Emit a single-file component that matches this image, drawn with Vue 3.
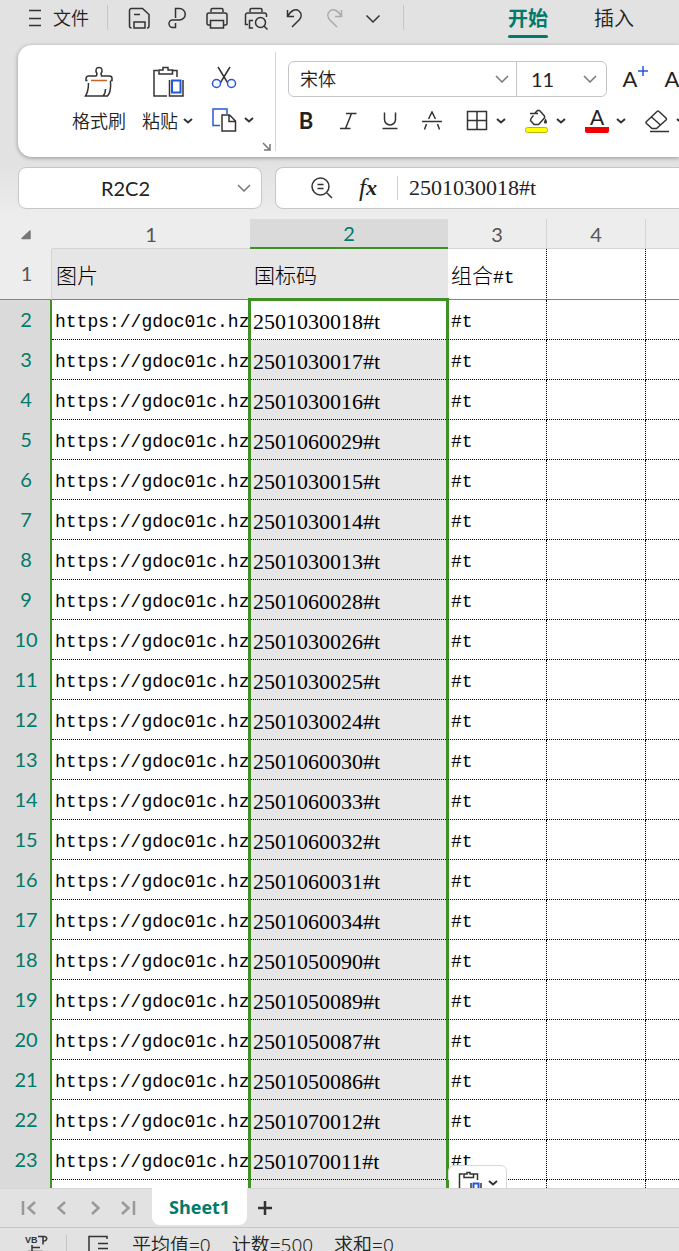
<script setup>
import { ref } from 'vue'

const codes = [
  '2501030018', '2501030017', '2501030016', '2501060029', '2501030015',
  '2501030014', '2501030013', '2501060028', '2501030026', '2501030025',
  '2501030024', '2501060030', '2501060033', '2501060032', '2501060031',
  '2501060034', '2501050090', '2501050089', '2501050087', '2501050086',
  '2501070012', '2501070011',
]

const rows = codes.map((code, i) => ({
  no: i + 2,
  url: 'https://gdoc01c.hz',
  code: code + '#t',
  combo: '#t',
}))

const fontName = ref('宋体')
const fontSize = ref('11')
const cellName = ref('R2C2')
const formula = ref('2501030018#t')

// 状态栏统计
const stats = ['平均值=0', '计数=500', '求和=0']
</script>

<template>
  <div class="app">
    <nav class="menubar">
      <button class="file-btn">
        <svg width="14" height="18" viewBox="0 0 14 18"><path d="M1 1.500h12M1 9.500h12M1 16.500h12" /></svg>
        文件
      </button>
      <i class="divider"></i>
      <div class="quick">
        <button aria-label="保存">
          <svg width="24" height="24" viewBox="0 0 24 24"><path d="M4.500 22a2 2 0 0 1-2-2V4.500a2 2 0 0 1 2-2h11l6.500 6V20a2 2 0 0 1-2 2M7 8.500h6M7 22v-6h11v6z" /></svg>
        </button>
        <button aria-label="输出为PDF">
          <svg width="24" height="24" viewBox="0 0 24 24"><path d="M9.500 12V2.500h4a5.500 5.500 0 0 1 0 11.500H6.500a3.500 3.500 0 0 0-3.500 3.500c0 2 1.500 4 3.500 4h3V17" /></svg>
        </button>
        <button aria-label="打印">
          <svg width="24" height="24" viewBox="0 0 24 24"><path d="M6 6V4a1.500 1.500 0 0 1 1.500-1.500h9A1.500 1.500 0 0 1 18 4v2M5 19H3.500A1.500 1.500 0 0 1 2 17.500V9a2 2 0 0 1 2-2h16a2 2 0 0 1 2 2v8.500a1.500 1.500 0 0 1-1.500 1.500H19M5.500 14.500h13V22h-13z" /></svg>
        </button>
        <button aria-label="打印预览">
          <svg width="24" height="24" viewBox="0 0 24 24"><path d="M6 6V4a1.500 1.500 0 0 1 1.500-1.500h9A1.500 1.500 0 0 1 18 4v2M4 18.500H1.500V9a2 2 0 0 1 2-2h17a2 2 0 0 1 2 2v2M9 14.500H5.500V22H9" /><circle cx="16.500" cy="16.500" r="5" /><path d="M20 20l3.500 3.500" /></svg>
        </button>
        <button aria-label="撤销">
          <svg width="24" height="24" viewBox="0 0 24 24"><path d="M4.500 4v6.500H11M5 10C8 4 13 2.500 16 5c3 2.500 2.500 6 .5 8.500L9 21" /></svg>
        </button>
        <button aria-label="恢复" class="dim" disabled>
          <svg width="24" height="24" viewBox="0 0 24 24"><path d="M19.500 4v6.500H13M19 10C16 4 11 2.500 8 5c-3 2.500-2.500 6-.5 8.500L15 21" /></svg>
        </button>
        <button aria-label="更多">
          <svg width="24" height="24" viewBox="0 0 24 24"><path d="M5.500 9.500l6.500 6.500 6.500-6.500" /></svg>
        </button>
      </div>
      <i class="divider"></i>
      <div class="tabs">
        <button class="tab active">开始</button>
        <button class="tab">插入</button>
      </div>
    </nav>

    <section class="ribbon">
      <div class="clipboard">
        <button class="big-btn">
          <svg width="30" height="32" viewBox="0 0 30 32">
            <path d="M12.500 10l.5-2.500C11 4.500 12 1.500 15 1.500s4 3 2 6l.5 2.500h8a2.500 2.500 0 0 1 2.500 2.500v2h-1.500M3.500 14.500H2v-2A2.500 2.500 0 0 1 4.500 10h8M4.500 17c0 6-.5 9-3 13h22c3-3 3.500-8 3-15M19 30c2-2 2.500-4 2.500-7" />
            <path d="M7 14.500h16" class="orange" />
          </svg>
          <span>格式刷</span>
        </button>
        <button class="big-btn">
          <svg width="32" height="32" viewBox="0 0 32 32">
            <path d="M6 4.500H2V30h13M21 4.500h4V11M7 4h4V1.500h5V4h4.500v4H7zM17.500 14v16H31V14" />
            <path d="M20 14.500h8.500v12H20z" class="blue thick" />
          </svg>
          <span>粘贴<svg class="chev" width="10" height="6" viewBox="0 0 10 6"><path d="M1 1l4 3.500L9 1" /></svg></span>
        </button>
        <div class="cutcopy">
          <button aria-label="剪切">
            <svg width="26" height="24" viewBox="0 0 26 24"><path d="M7 1l9.500 15.500M19 1L9.500 16.500" /><circle cx="5.500" cy="17.500" r="4" class="blue" /><circle cx="20.500" cy="17.500" r="4" class="blue" /></svg>
          </button>
          <button aria-label="复制">
            <svg width="26" height="26" viewBox="0 0 26 26"><path d="M9 18.500H2V2h14v5" class="blue" /><path d="M11 8h7.500l6 6v10H11zM18 8v6.500h6" /></svg>
            <svg class="chev" width="10" height="6" viewBox="0 0 10 6"><path d="M1 1l4 3.500L9 1" /></svg>
          </button>
        </div>
        <button class="launcher" aria-label="剪贴板设置">
          <svg width="9" height="9" viewBox="0 0 9 9"><path d="M1 1l6.500 6.500M8 2v6H2" /></svg>
        </button>
      </div>

      <div class="font-group">
        <div class="font-row">
          <div class="selects">
            <label class="pick name-pick">
              <select v-model="fontName" aria-label="字体"><option>宋体</option></select>
              <svg width="14" height="8" viewBox="0 0 14 8"><path d="M1 1l6 6 6-6" /></svg>
            </label>
            <label class="pick size-pick">
              <select v-model="fontSize" aria-label="字号"><option>11</option></select>
              <svg width="14" height="8" viewBox="0 0 14 8"><path d="M1 1l6 6 6-6" /></svg>
            </label>
          </div>
          <button class="grow" aria-label="增大字号">A<svg width="12" height="12" viewBox="0 0 12 12"><path d="M6 1v10M1 6h10" class="blue" /></svg></button>
          <button class="grow" aria-label="减小字号">A<svg width="12" height="12" viewBox="0 0 12 12"><path d="M1 3h10" class="blue" /></svg></button>
        </div>
        <div class="tool-row">
          <button class="tool bold" aria-label="加粗">B</button>
          <button class="tool" aria-label="倾斜">
            <svg width="20" height="20" viewBox="0 0 20 20"><path d="M8 2.500h10.500M2 17.500h10.500M13.500 2.500l-6 15" /></svg>
          </button>
          <button class="tool" aria-label="下划线">
            <svg width="20" height="20" viewBox="0 0 20 20"><path d="M4.500 1.500v7a5.500 5.500 0 0 0 11 0v-7M2.500 17.500h15" /></svg>
          </button>
          <button class="tool" aria-label="删除线">
            <svg width="22" height="20" viewBox="0 0 22 20"><path d="M7.500 8L11 1l3.500 7M1 10.500h20M5.500 13l-2 5.500M16.500 13l2 5.500" /></svg>
          </button>
          <div class="splits">
            <button class="split" aria-label="边框">
              <svg width="24" height="24" viewBox="0 0 24 24"><path d="M2.500 2.500h19v18h-19zM12 2.500v18M2.500 11.500h19" /></svg>
              <svg class="chev" width="10" height="6" viewBox="0 0 10 6"><path d="M1 1l4 3.500L9 1" /></svg>
            </button>
            <button class="split" aria-label="填充颜色">
              <svg width="24" height="24" viewBox="0 0 24 24">
                <path d="M5 4.500h8M10 4l2.500-2.500h2l5 5.500v2l-6 6.500H9L5.500 11.500c0-2 1-3 3-5" />
                <path d="M20.500 9.500c-2 3-2 5 0 5s2-2 0-5z" class="solid" />
                <rect x=".5" y="18.500" width="22" height="5" rx="2" class="swatch-yellow" />
              </svg>
              <svg class="chev" width="10" height="6" viewBox="0 0 10 6"><path d="M1 1l4 3.500L9 1" /></svg>
            </button>
            <button class="split" aria-label="字体颜色">
              <span class="font-color">A</span>
              <svg class="chev" width="10" height="6" viewBox="0 0 10 6"><path d="M1 1l4 3.500L9 1" /></svg>
            </button>
            <button class="split" aria-label="清除">
              <svg width="24" height="24" viewBox="0 0 24 24"><path d="M1.500 12.500L12 2.500q1-1 2 0l7 6.500q1 1 0 2L11.500 19.500H7l-5.500-5q-1-1 0-2zM6.500 8l9 8M5 22.500h19" /></svg>
              <svg class="chev" width="10" height="6" viewBox="0 0 10 6"><path d="M1 1l4 3.500L9 1" /></svg>
            </button>
          </div>
        </div>
      </div>
    </section>

    <section class="formula-bar">
      <div class="name-box">
        <input v-model="cellName" aria-label="名称框" />
        <button aria-label="展开名称列表"><svg width="14" height="8" viewBox="0 0 14 8"><path d="M1 1l6 6 6-6" /></svg></button>
      </div>
      <div class="formula-box">
        <button aria-label="缩放">
          <svg width="24" height="24" viewBox="0 0 24 24"><circle cx="10.500" cy="10.500" r="8.500" /><path d="M7.500 8.500h6M7.500 12.500h6M17 17l5 5" /></svg>
        </button>
        <button class="fx" aria-label="插入函数"><i>f</i><b>x</b></button>
        <input v-model="formula" aria-label="编辑栏" />
      </div>
    </section>

    <main class="grid">
      <table>
        <colgroup>
          <col class="w-no" /><col class="w-wide" /><col class="w-wide" /><col class="w-slim" /><col class="w-slim" /><col />
        </colgroup>
        <thead>
          <tr>
            <th class="corner"><svg width="10" height="10" viewBox="0 0 10 10"><path d="M9 1v7.500H1z" /></svg></th>
            <th>1</th>
            <th class="picked">2</th>
            <th class="line">3</th>
            <th class="line">4</th>
            <th></th>
          </tr>
        </thead>
        <tbody>
          <tr class="frozen">
            <th>1</th>
            <td class="title">图片</td>
            <td class="title">国标码</td>
            <td>组合<span class="mono">#t</span></td>
            <td></td>
            <td></td>
          </tr>
          <tr v-for="(row, i) in rows" :key="row.no">
            <th>{{ row.no }}</th>
            <td class="url">{{ row.url }}</td>
            <td class="sel" :class="{ first: i === 0 }">{{ row.code }}</td>
            <td class="combo">
              {{ row.combo }}
              <button v-if="i === rows.length - 1" class="paste-tip" aria-label="粘贴选项">
                <svg width="24" height="24" viewBox="0 0 24 24"><path d="M5 3H1.500v20H10M16 3h3.500v6M6 3h3V1.500h3V3h3.500v3.500H6zM13 12v11h10V12" /><path d="M15.500 12.500h5v9h-5z" class="blue thick" /></svg>
                <svg class="chev" width="10" height="6" viewBox="0 0 10 6"><path d="M1 1l4 3.500L9 1" /></svg>
              </button>
            </td>
            <td></td>
            <td></td>
          </tr>
          <tr>
            <th></th>
            <td class="url"></td>
            <td class="sel"></td>
            <td></td>
            <td></td>
            <td></td>
          </tr>
        </tbody>
      </table>
    </main>

    <footer>
      <div class="sheets">
        <div class="sheet-nav">
          <button aria-label="第一个工作表"><svg width="16" height="16" viewBox="0 0 16 16"><path d="M2 1v14M14 2L7.500 8l6.500 6" /></svg></button>
          <button aria-label="上一个工作表"><svg width="16" height="16" viewBox="0 0 16 16"><path d="M11 2L4.500 8l6.500 6" /></svg></button>
          <button aria-label="下一个工作表"><svg width="16" height="16" viewBox="0 0 16 16"><path d="M5 2l6.500 6L5 14" /></svg></button>
          <button aria-label="最后一个工作表"><svg width="16" height="16" viewBox="0 0 16 16"><path d="M2 2l6.500 6L2 14M14 1v14" /></svg></button>
        </div>
        <button class="sheet-tab">Sheet1</button>
        <button class="add" aria-label="新建工作表"><svg width="16" height="16" viewBox="0 0 16 16"><path d="M8 1v14M1 8h14" /></svg></button>
      </div>
      <div class="status">
        <svg width="24" height="24" viewBox="0 0 24 24">
          <text x="0" y="8">VB</text>
          <path d="M13 1.500h5v8M18 1.500c5-1 5 5 0 4.500M7 10v10M7 12.500h8M3 16.500h14v6" />
        </svg>
        <i class="divider"></i>
        <svg width="24" height="24" viewBox="0 0 24 24"><path d="M20 4V1.500H2V18h6M11 8.500h10M11 13.500h10M11 18.500h10" /></svg>
        <span v-for="s in stats" :key="s">{{ s }}</span>
      </div>
    </footer>
  </div>
</template>

<style>
body {
  margin: 0;
  overflow: hidden;
}
</style>

<style scoped>
.app {
  height: 100vh;
  display: flex;
  flex-direction: column;
  overflow: hidden;
  background: linear-gradient(#e2e2e2 0, #e2e2e2 165px, #ededed 219px);
  color: #222;
  font-family: Lato, 'Noto Sans CJK SC', sans-serif;
}
button {
  display: flex;
  align-items: center;
  justify-content: center;
  padding: 0;
  border: 0;
  background: none;
  color: inherit;
  font: inherit;
}
input,
select {
  min-width: 0;
  padding: 0;
  border: 0;
  outline: 0;
  appearance: none;
  background: none;
  color: inherit;
  font: inherit;
}
svg {
  flex: none;
  fill: none;
  stroke: #333;
  stroke-width: 1.5;
}
.blue {
  stroke: #2457dc;
}
.orange {
  stroke: #c8622e;
}
.thick {
  stroke-width: 2;
}
.chev {
  stroke-width: 2;
}
.divider {
  width: 1px;
  height: 25px;
  background: #c6c6c6;
}

/* 菜单栏 */
.menubar {
  flex: none;
  display: flex;
  align-items: center;
  box-sizing: border-box;
  height: 45px;
  padding: 0 0 10px 28px;
}
.file-btn {
  gap: 11px;
  margin-right: 18px;
  font-size: 18px;
  line-height: 24px;
  font-weight: 350;
}
.quick {
  display: flex;
  margin: 0 11px;
}
.quick button {
  width: 39px;
}
.dim svg {
  stroke: #aaa;
}
.tabs {
  display: flex;
  gap: 46px;
  margin-left: 104px;
}
.tab {
  position: relative;
  font-size: 20px;
  line-height: 26px;
  font-weight: 350;
  white-space: nowrap;
}
.tab.active {
  color: #007a6a;
  font-weight: 700;
}
.tab.active::after {
  content: '';
  position: absolute;
  left: 0;
  right: 0;
  bottom: -7px;
  height: 3px;
  border-radius: 2px;
  background: #007a6a;
}

/* 功能区 */
.ribbon {
  flex: none;
  display: flex;
  height: 112px;
  margin-left: 18px;
  overflow: hidden;
  box-sizing: border-box;
  padding: 7px 0 6px;
  border-radius: 14px 0 0 14px;
  background: #fff;
  box-shadow: 0 1px 4px rgba(0, 0, 0, 0.35);
}
.clipboard {
  flex: none;
  display: flex;
  position: relative;
  box-sizing: border-box;
  width: 258px;
  padding: 14px 0 0 54px;
  border-right: 1px solid #d4d4d4;
}
.big-btn {
  flex-direction: column;
  justify-content: flex-start;
  gap: 10px;
  font-size: 18px;
  line-height: 26px;
  font-weight: 350;
  white-space: nowrap;
}
.big-btn + .big-btn {
  margin-left: 16px;
}
.big-btn span {
  display: flex;
  align-items: center;
  gap: 5px;
}
.cutcopy {
  display: flex;
  flex-direction: column;
  align-items: flex-start;
  gap: 17px;
  margin-left: 18px;
}
.cutcopy button {
  gap: 7px;
}
.launcher {
  position: absolute;
  right: 4px;
  bottom: 0;
}
.launcher svg {
  stroke: #777;
}
.font-group {
  flex: none;
  padding: 9px 0 0 12px;
}
.font-row {
  display: flex;
  align-items: center;
}
.selects {
  display: flex;
  box-sizing: border-box;
  width: 319px;
  height: 36px;
  margin-right: 18px;
  border: 1px solid #c4c4c4;
  border-radius: 6px;
}
.pick {
  display: flex;
  align-items: center;
  box-sizing: border-box;
  padding: 0 7px 0 11px;
}
.pick svg,
.name-box svg {
  stroke: #777;
}
.pick select {
  flex: 1;
  font-size: 18px;
  font-weight: 350;
}
.name-pick {
  width: 227px;
}
.size-pick {
  flex: 1;
  padding: 0 9px 0 14px;
  border-left: 1px solid #c4c4c4;
}
.size-pick select {
  font-size: 20px;
  font-weight: 400;
}
.grow {
  align-items: flex-start;
  width: 22px;
  margin-right: 20px;
  font-size: 22px;
  line-height: 28px;
}
.tool-row {
  display: flex;
  align-items: center;
  height: 24px;
  margin: 12px 0 0 -3px;
}
.tool {
  width: 42px;
  height: 24px;
}
.bold {
  font-size: 22px;
  line-height: 24px;
  font-weight: 700;
}
.splits {
  display: flex;
  margin-left: 12px;
}
.split {
  justify-content: flex-start;
  gap: 7px;
  width: 60px;
}
.solid {
  fill: #333;
  stroke: none;
}
.swatch-yellow {
  fill: #ff0;
  stroke: #b5b51b;
  stroke-width: 1;
}
.font-color {
  box-sizing: border-box;
  width: 24px;
  height: 24px;
  border-bottom: 6px solid #f00000;
  border-radius: 2px;
  font-size: 21px;
  line-height: 16px;
}

/* 编辑栏 */
.formula-bar {
  flex: none;
  display: flex;
  gap: 13px;
  height: 42px;
  margin: 10px 0 10px 18px;
}
.name-box,
.formula-box {
  display: flex;
  align-items: center;
  box-sizing: border-box;
  border: 1px solid #c6c6c6;
  background: #fff;
}
.name-box {
  width: 244px;
  padding-right: 10px;
  border-radius: 8px;
}
.name-box input {
  flex: 1;
  padding-right: 5px;
  font-size: 20px;
  text-align: center;
}
.formula-box {
  flex: 1;
  padding-left: 34px;
  border-right: 0;
  border-radius: 8px 0 0 8px;
}
.fx {
  width: 24px;
  margin: 0 17px 0 22px;
  font-family: 'Liberation Serif', serif;
  font-size: 25px;
  line-height: 26px;
}
.fx b {
  font-size: 22px;
  font-style: italic;
}
.formula-box input {
  flex: 1;
  height: 24px;
  padding-left: 11px;
  border-left: 1px solid #ccc;
  font-family: 'Liberation Serif', 'Noto Sans CJK SC', serif;
  font-size: 22px;
}

/* 表格 */
.grid {
  flex: 1;
  min-height: 0;
  overflow: hidden;
  background: #fff;
}
table {
  width: 100%;
  table-layout: fixed;
  border-spacing: 0;
}
.w-no {
  width: 52px;
}
.w-wide {
  width: 198px;
}
.w-slim {
  width: 99px;
}
th,
td {
  box-sizing: border-box;
  height: 40px;
  padding: 0;
  white-space: nowrap;
}
th {
  background: #ededed;
  color: #555;
  font-size: 20px;
  line-height: 24px;
  font-weight: 400;
}
thead th {
  height: 30px;
  border-bottom: 1px solid #d4d4d4;
}
thead .picked {
  border-bottom: 2px solid #3f9124;
  background: #dadada;
  color: #007a6a;
}
thead .line {
  border-right: 1px solid #d4d4d4;
}
thead .corner {
  border-bottom-color: #ededed;
  line-height: 10px;
}
.corner svg {
  fill: #777;
  stroke: #777;
  stroke-linejoin: round;
}
tbody th {
  padding: 0 0 2px 2px;
  border-right: 2px solid #3f9124;
  background: #dadada;
  color: #007a6a;
}
td {
  padding: 4px 0 0 3px;
  border-bottom: 1px dotted #000;
  color: #000;
  font-family: 'Liberation Mono', 'Noto Sans CJK SC', monospace;
  font-size: 18px;
  line-height: 30px;
}
td:nth-child(n + 4) {
  border-right: 1px dotted #000;
}
td:last-child {
  border-right: 0;
}
.frozen th,
.frozen td {
  height: 51px;
  border-bottom: 1px solid #27b478;
}
.frozen th {
  border-right: 1px solid #d4d4d4;
  background: #ededed;
  color: #555;
}
.frozen td {
  padding-top: 8px;
  font-size: 21px;
  font-weight: 300;
}
.frozen .title {
  padding-left: 4px;
  background: #e6e6e6;
}
.frozen .mono {
  font-size: 18px;
}
.url {
  overflow: hidden;
}
.sel {
  position: relative;
  background: #e6e6e6;
  font-family: 'Liberation Serif', serif;
  font-size: 22px;
}
.sel.first {
  background: #fff;
}
.sel::after {
  content: '';
  position: absolute;
  inset: 0 -1px -1px -2px;
  border: solid #3f9124;
  border-width: 0 3px;
}
.sel.first::after {
  top: -2px;
  border-top-width: 3px;
}
.combo {
  position: relative;
}
.paste-tip {
  position: absolute;
  left: 0;
  top: 25px;
  gap: 6px;
  width: 59px;
  height: 36px;
  border: 1px solid #d8d8d8;
  border-radius: 6px;
  background: #fff;
}

/* 底部 */
footer {
  flex: none;
  background: #e2e2e2;
}
.sheets {
  display: flex;
  box-sizing: border-box;
  height: 40px;
  padding-left: 12px;
  border-top: 1px solid #d6d6d6;
  border-bottom: 1px solid #c6c6c6;
}
.sheet-nav {
  display: flex;
  padding-right: 8px;
}
.sheet-nav button {
  width: 33px;
}
.sheet-nav svg {
  stroke: #999;
  stroke-width: 2.5;
}
.sheet-tab {
  height: 37px;
  margin-top: -1px;
  padding: 0 17px;
  border-radius: 0 0 8px 8px;
  background: #fff;
  color: #007a6a;
  font-family: 'Open Sans', sans-serif;
  font-size: 18px;
  font-weight: 700;
}
.add {
  width: 36px;
}
.add svg {
  stroke-width: 2.5;
}
.status {
  display: flex;
  align-items: flex-start;
  height: 16px;
  padding: 7px 0 0 25px;
  overflow: hidden;
  font-family: 'Noto Sans', 'Noto Sans CJK SC', sans-serif;
  font-size: 19px;
  line-height: 20px;
  font-weight: 350;
}
.status text {
  fill: #333;
  stroke: none;
  font-family: 'Liberation Sans', sans-serif;
  font-size: 9px;
  font-weight: 700;
}
.status .divider {
  margin: 0 20px 0 17px;
}
.status span {
  margin-left: 21px;
}
</style>
